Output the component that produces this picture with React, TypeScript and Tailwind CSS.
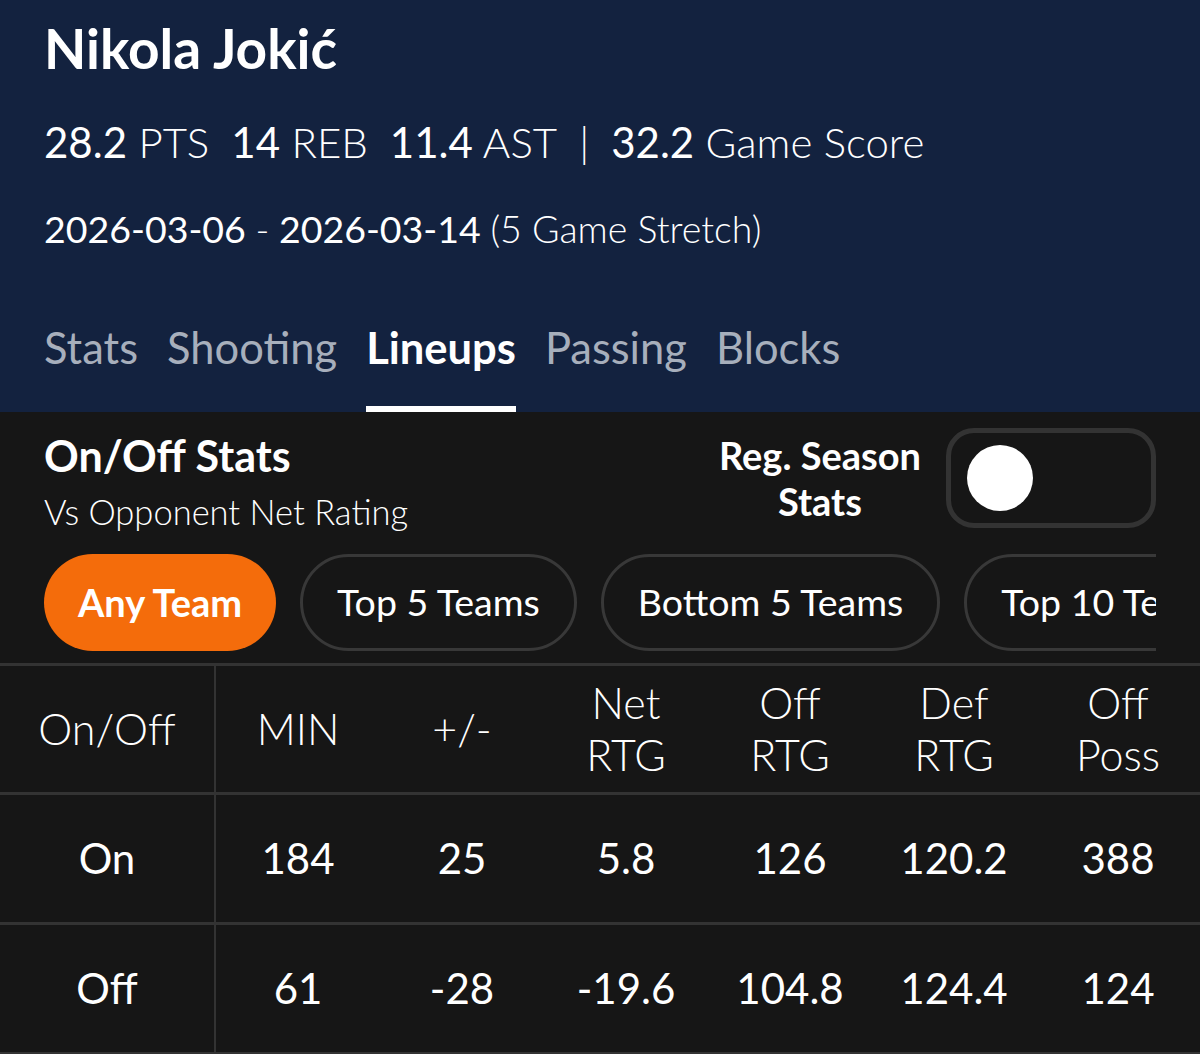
import { useState } from 'react';

const tabs = ['Stats', 'Shooting', 'Lineups', 'Passing', 'Blocks'];
const filters = ['Any Team', 'Top 5 Teams', 'Bottom 5 Teams', 'Top 10 Teams'];

const columns = [['MIN'], ['+/-'], ['Net', 'RTG'], ['Off', 'RTG'], ['Def', 'RTG'], ['Off', 'Poss']];

const rows = [
  { label: 'On', values: ['184', '25', '5.8', '126', '120.2', '388'] },
  { label: 'Off', values: ['61', '-28', '-19.6', '104.8', '124.4', '124'] },
];

const stats = [
  { value: '28.2', label: 'PTS' },
  { value: '14', label: 'REB' },
  { value: '11.4', label: 'AST' },
];

export default function App() {
  const [activeTab, setActiveTab] = useState('Lineups');
  const [filter, setFilter] = useState('Any Team');
  const [regSeason, setRegSeason] = useState(false);

  return (
    <div className="w-[1200px] h-[1054px] overflow-hidden bg-[#161616] text-white font-['Lato','Noto_Sans',sans-serif]">
      {/* Player header */}
      <header className="bg-[#13223f] px-[44px] pt-[15px]">
        <h1 className="text-[55px] leading-[66px] font-bold">Nikola Jokić</h1>

        <div className="mt-[36px] flex items-baseline gap-[22px] text-[42px] leading-[50px] font-light">
          {stats.map((s) => (
            <span key={s.label}>
              <span className="font-normal">{s.value}</span> {s.label}
            </span>
          ))}
          <span>|</span>
          <span>
            <span className="font-normal">32.2</span> Game Score
          </span>
        </div>

        <p className="mt-[39px] text-[37.5px] leading-[45px]">
          2026-03-06 <span className="font-light">-</span> 2026-03-14{' '}
          <span className="font-light">(5 Game Stretch)</span>
        </p>

        <nav className="mt-[70px] flex gap-[29px]">
          {tabs.map((t) => (
            <button
              key={t}
              onClick={() => setActiveTab(t)}
              className={
                t === activeTab
                  ? 'pb-[33px] text-[43.5px] leading-[52px] font-bold text-white border-b-[6px] border-white'
                  : 'pb-[33px] text-[43.5px] leading-[52px] text-[#a7afbc] border-b-[6px] border-transparent'
              }
            >
              {t}
            </button>
          ))}
        </nav>
      </header>

      {/* On/Off section */}
      <section className="px-[44px] pt-[16px]">
        <div className="flex items-start justify-between">
          <div className="pt-[2px]">
            <h2 className="text-[43px] leading-[52px] font-bold">On/Off Stats</h2>
            <p className="mt-[9px] text-[34.5px] leading-[41px] font-light">Vs Opponent Net Rating</p>
          </div>
          <div className="flex items-center gap-[25px]">
            <p className="text-center text-[38px] leading-[46px] font-bold">
              Reg. Season
              <br />
              Stats
            </p>
            <button
              onClick={() => setRegSeason(!regSeason)}
              className={
                regSeason
                  ? 'w-[210px] h-[100px] rounded-[28px] border-[5px] border-[#333333] flex items-center justify-end px-[16px]'
                  : 'w-[210px] h-[100px] rounded-[28px] border-[5px] border-[#333333] flex items-center justify-start px-[16px]'
              }
            >
              <span className="block w-[66px] h-[66px] rounded-full bg-white" />
            </button>
          </div>
        </div>

        <div className="mt-[22px] flex gap-[24px] overflow-hidden">
          {filters.map((f) => (
            <button
              key={f}
              onClick={() => setFilter(f)}
              className={
                f === filter
                  ? 'shrink-0 h-[97px] rounded-full px-[34px] bg-[#f46c0b] text-[38px] font-bold whitespace-nowrap'
                  : 'shrink-0 h-[97px] rounded-full px-[34px] border-[3px] border-[#383838] text-[37.5px] whitespace-nowrap'
              }
            >
              {f}
            </button>
          ))}
        </div>
      </section>

      {/* Table */}
      <div className="mt-[12px] border-t-[3px] border-[#333333]">
        <div className="grid grid-cols-[216px_repeat(6,1fr)] h-[129px] border-b-[3px] border-[#333333] text-[43px] leading-[52px] font-light">
          <div className="flex items-center justify-center border-r-2 border-[#333333]">On/Off</div>
          {columns.map((c, i) => (
            <div key={i} className="flex flex-col items-center justify-center text-center">
              {c.map((line) => (
                <span key={line}>{line}</span>
              ))}
            </div>
          ))}
        </div>
        {rows.map((r) => (
          <div
            key={r.label}
            className="grid grid-cols-[216px_repeat(6,1fr)] h-[130px] border-b-[3px] border-[#333333] text-[42px]"
          >
            <div className="flex items-center justify-center border-r-2 border-[#333333]">{r.label}</div>
            {r.values.map((v, i) => (
              <div key={i} className="flex items-center justify-center">
                {v}
              </div>
            ))}
          </div>
        ))}
      </div>
    </div>
  );
}
